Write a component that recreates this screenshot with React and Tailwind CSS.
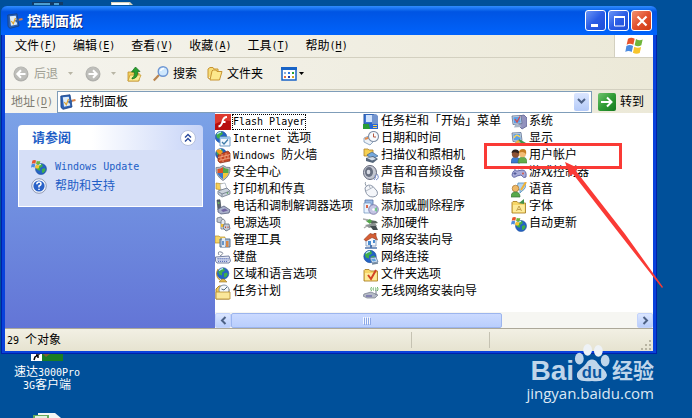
import React from "react";

const Latin = ({ children }) => (
  <span className="font-['DejaVu_Sans_Mono','Liberation_Mono',monospace] text-[10px]">{children}</span>
);

const Icon = ({ size = 16, children }) => (
  <svg width={size} height={size} viewBox="0 0 16 16" className="shrink-0" aria-hidden="true">
    {children}
  </svg>
);

const Globe = ({ x = 8, y = 8, r = 6 }) => (
  <g transform={`translate(${x} ${y}) scale(${r / 6})`}>
    <circle r="6" fill="#2463c4" stroke="#174a99" strokeWidth=".6" />
    <path d="M-5-2Q-3-6 1-5.5L2-3-1-1-1 2-4 1ZM1 0 4-1 5 1 3 4 1 4Z" fill="#3fae49" />
    <path d="M-4-3Q-2-5 0-5" stroke="#bfe6ff" strokeWidth="1.2" fill="none" />
  </g>
);

const FolderShape = () => (
  <>
    <path d="M1 3.5 2 2.5H6L7.5 4H14.5V14H1Z" fill="#f6d667" stroke="#a9822a" strokeWidth=".9" />
    <path d="M2 6H13.7V13.2H2Z" fill="#fdeb9a" />
  </>
);

const WinPetals = () => (
  <>
    <path d="M2 2Q4.500.5 7 2L6 6.500Q3.500 5 1 6.500Z" fill="#e8542c" />
    <path d="M8 2.300Q10.500 4 13 2.700L12 7Q9.500 8.500 7 7Z" fill="#6fb53b" />
    <path d="M.8 7.500Q3.300 6 5.800 7.500L4.800 12Q2.300 10.500 0 12Z" fill="#4b8be0" />
    <path d="M6.700 8Q9.200 9.500 11.800 8.200L10.800 12.700Q8.300 14 5.700 12.500Z" fill="#f7c52d" />
  </>
);

const UpdateGlobe = () => (
  <>
    <Globe x={10} y={10} r={5.5} />
    <g transform="scale(.72)">
      <WinPetals />
    </g>
  </>
);

const ControlPanelShape = () => (
  <>
    <path d="M.8 2 10 .8 12 13 3 15.300 1 13.500Z" fill="#2c62b4" stroke="#173f83" strokeWidth=".8" />
    <path d="M2.800 3.300 8.800 2.700 10.200 11.500 4 12.700Z" fill="#dcecfb" />
    <path d="M4.300 8 6.300 10.800 8.500 5" stroke="#e0a32c" strokeWidth="1.200" fill="none" />
    <path d="M8.500 8.500 12 6.800" stroke="#365f9d" strokeWidth="2.400" />
    <path d="M12 6.800 15.500 6" stroke="#d98045" strokeWidth="2" />
  </>
);

const Monitor = () => (
  <>
    <path d="M1 2 10 1.500 11 9.500 2 10.500Z" fill="#cfd8e6" stroke="#5c7090" strokeWidth=".8" />
    <path d="M2.200 3.200 9 2.700 9.800 8.500 3 9.200Z" fill="#5b9fe8" />
    <path d="M4 11 9 10.500 10.500 13 3 13.500Z" fill="#a9b5c6" />
  </>
);

const icons = {
  flash: (
    <>
      <path d="M0 0H16V16H0Z" fill="#b80f0f" />
      <path d="M0 0H16V7Q8 5 0 10Z" fill="#dd3a30" />
      <path d="M12 3Q8.500 3 7.500 7.500Q6.500 12 3.500 12.500M7 8H10.500" stroke="#fff" strokeWidth="1.900" fill="none" />
    </>
  ),
  internet: (
    <>
      <Globe x={6} y={6} r={5.8} />
      <path d="M5 6H15V15H5Z" fill="#f3f9ff" stroke="#6f9bc4" />
      <path d="M5 6H15V8H5Z" fill="#9cc4e8" />
      <path d="M7 11 9 13 13 8.500" stroke="#3f7ca8" strokeWidth="1.300" fill="none" />
    </>
  ),
  firewall: (
    <>
      <Globe x={6} y={6} r={5.5} />
      <path d="M3 7 13 3 15 5V13L5 15 3 13Z" fill="#c64825" stroke="#84301b" strokeWidth=".7" />
      <path d="M3 9.500 15 6.500M4 12.500 15 10M7 6V9M11 5V8M6 9V12M10 8V11M13 7V10M8 12V14" stroke="#f6b18b" strokeWidth=".8" />
      <path d="M1 3Q4-1 8 4L5 7Z" fill="#f39c20" />
    </>
  ),
  security: (
    <>
      <path d="M8 .5Q11 3 15 2.500Q15.500 11 8 15.500Q.5 11 1 2.500Q5 3 8 .5Z" fill="#b9bec8" stroke="#808996" />
      <path d="M8 2Q5.500 4 2.500 4V8H8Z" fill="#dd5126" />
      <path d="M8 2Q10.500 4 13.500 4V8H8Z" fill="#55a847" />
      <path d="M2.500 8H8V14Q3.500 11.500 2.500 8Z" fill="#3b78cc" />
      <path d="M13.500 8H8V14Q12.500 11.500 13.500 8Z" fill="#f4c737" />
    </>
  ),
  printer: (
    <>
      <path d="M1 1 8 2 7 8 1 7Z" fill="#f5cf58" stroke="#b98a22" strokeWidth=".7" />
      <path d="M5 2 10 1 12 7 6 8Z" fill="#fff" stroke="#9eaab8" strokeWidth=".7" />
      <path d="M3 9 12 6 15 9V12L7 15 3 12Z" fill="#cbd2dc" stroke="#697586" strokeWidth=".8" />
      <path d="M4 10 7 12 14 9.500M7 12V14" stroke="#7c8796" fill="none" />
      <circle cx="12.500" cy="11" r=".8" fill="#49a24b" />
    </>
  ),
  phone: (
    <>
      <path d="M2 1 5 .8 6 10 3 11Z" fill="#59636e" stroke="#313a44" strokeWidth=".6" />
      <path d="M3 10 9 7 15 11 14 14 6 15 3 13Z" fill="#a9b0ca" stroke="#58617e" strokeWidth=".8" />
      <path d="M6 11 10 9.500 13 11.500 8 13Z" fill="#7064a2" />
      <path d="M2.800 4H4.500" stroke="#72c965" strokeWidth="1.500" />
    </>
  ),
  power: (
    <>
      <path d="M2 2 6 1 8 4 6 7 2 6Z" fill="#c3c9d4" stroke="#6c7583" strokeWidth=".8" />
      <path d="M6 5Q8 1 10 5V13H6Z" fill="#e6e8ed" stroke="#68727e" strokeWidth=".8" />
      <path d="M6 8H10V11H6Z" fill="#f1bd33" />
      <path d="M9 8 14 8 15 13 11 15 8 12Z" fill="#c5cbd6" stroke="#5e6b7e" strokeWidth=".8" />
      <path d="M10.500 10.500V12M13 10.500V12" stroke="#c15034" />
    </>
  ),
  admin: (
    <>
      <path d="M0 3H4L5 4H10V10H0Z" fill="#f6d566" stroke="#b68c2a" strokeWidth=".7" />
      <path d="M5 6H15V14H5Z" fill="#a8bdd7" stroke="#567292" />
      <path d="M7 5H10V14H7Z" fill="#dfe9f4" />
      <path d="M11 8H13.500V14H11Z" fill="#d88845" />
      <path d="M8 8V12" stroke="#4078b9" strokeWidth="1.500" />
    </>
  ),
  keyboard: (
    <>
      <path d="M4 5Q2 1 6 2T5 6" stroke="#7b8496" fill="none" />
      <path d="M.5 7 14 6 15.500 11 14 13H2L.5 11Z" fill="#e3e7f3" stroke="#68749a" strokeWidth=".9" />
      <path d="M2.500 8.500H13.500M2.500 10H14M3 11.500H13" stroke="#5d72bb" strokeDasharray="1.200 .8" />
    </>
  ),
  region: (
    <>
      <path d="M3 2Q-.5 9 5 13" stroke="#d1a43b" strokeWidth="1.200" fill="none" />
      <Globe x={8} y={6.5} r={5.8} />
      <path d="M7 12H9L12 15H4Z" fill="#e1b94c" stroke="#947125" strokeWidth=".6" />
    </>
  ),
  tasks: (
    <>
      <path d="M1 5 4 2H8L14 5V15H1Z" fill="#f2ca53" stroke="#9f7726" strokeWidth=".9" />
      <circle cx="9" cy="6" r="5" fill="#f4f8fc" stroke="#788ba3" strokeWidth=".9" />
      <path d="M9 6 12 3M9 6 6.500 5" stroke="#52697d" />
      <path d="M1 8H15V15H1Z" fill="#fae79a" stroke="#b28b2e" strokeWidth=".8" />
    </>
  ),
  taskbar: (
    <>
      <path d="M1 0H11V10H1Z" fill="#3c76d8" stroke="#285498" />
      <path d="M3 1H9V8H3Z" fill="#cfe2fc" />
      <path d="M9 1 13 0 15 2V10H9Z" fill="#7395cf" />
      <path d="M0 10H15V15H0Z" fill="#2765d8" />
      <path d="M0 10H6L7 15H0Z" fill="#299d35" />
      <path d="M10 11.500H14M10 13.500H14" stroke="#f5d25c" />
    </>
  ),
  date: (
    <>
      <path d="M1 7 8 4 14 7 7 14 1 11Z" fill="#edf2f8" stroke="#7994b5" strokeWidth=".8" />
      <path d="M2 8 9 5.500" stroke="#e38a4b" strokeWidth="2" />
      <circle cx="10.500" cy="5.500" r="5" fill="#f7fafe" stroke="#8190a6" strokeWidth="1.100" />
      <path d="M10.500 2.500V6H13" stroke="#b55a41" fill="none" />
    </>
  ),
  scanner: (
    <>
      <path d="M1 1H5L6 2H10V8H1Z" fill="#f6d052" stroke="#ae8129" strokeWidth=".8" />
      <path d="M4 7 9 4 15 8 9 11Z" fill="#75a8de" stroke="#42658d" strokeWidth=".7" />
      <path d="M3 10 10 8 15 11 10 15 3 13Z" fill="#56677c" />
      <path d="M4 10 10 9 13 11 9 12.500Z" fill="#d3dde9" />
    </>
  ),
  sound: (
    <>
      <ellipse cx="7" cy="7.500" rx="6.500" ry="7" fill="#c4c7d2" stroke="#62677a" />
      <ellipse cx="6" cy="7" rx="4" ry="5" fill="#686f80" />
      <ellipse cx="5.500" cy="7" rx="1.800" ry="2.300" fill="#d9dce5" />
      <path d="M12 10Q14 12 11 15M14 9Q17 13 13 15" stroke="#7588c7" fill="none" />
    </>
  ),
  mouse: (
    <>
      <path d="M4 5Q1 1 3 0" stroke="#8d98a6" fill="none" />
      <path d="M2 6Q5 1 10 4.500L14 9Q16 14 10 15Q4 15 2.500 9Z" fill="#f4f6fa" stroke="#8c96a8" />
      <path d="M3 9 10.500 5M6 3.500 7.500 6.800" stroke="#a0a8b5" strokeWidth=".8" />
    </>
  ),
  programs: (
    <>
      <path d="M2 1H10V11H2Z" fill="#99b9e6" stroke="#546fa1" strokeWidth=".8" />
      <path d="M1 4H8V14H1Z" fill="#e8f2ff" stroke="#698cb7" strokeWidth=".7" />
      <path d="M3 6H5V9H3Z" fill="#d9664a" />
      <circle cx="10.500" cy="10.500" r="4.800" fill="#c4c5e4" stroke="#73709f" strokeWidth=".8" />
      <path d="M10.500 10.500 14 8V13Z" fill="#72c68d" />
      <circle cx="10.500" cy="10.500" r="1.300" fill="#fff" />
    </>
  ),
  hardware: (
    <>
      <path d="M1 3 13 5 15 7 9 8Z" fill="#59645e" />
      <path d="M3 5 7 3 9 5 7 8Z" fill="#53a64a" />
      <path d="M2 9 12 7 14 10 6 12Z" fill="#8c9292" />
      <path d="M7 10 13 10 15 14 10 14Z" fill="#444d51" />
      <path d="M0 3 5 4M4 10 1 12" stroke="#aaa" strokeWidth="1.500" />
    </>
  ),
  home: (
    <>
      <path d="M3 7 8 2 13 7V13H3Z" fill="#f5f7fc" stroke="#7992b5" strokeWidth=".8" />
      <path d="M1 6.500 7 .5 11 1.500V0H13V3L14.500 7 9 4.500 3 8Z" fill="#d55e34" stroke="#913920" strokeWidth=".6" />
      <path d="M5 8H8V12H5ZM10 7H12V10H10Z" fill="#4a8cd0" />
      <path d="M2 15H14" stroke="#5075ad" strokeWidth="1.500" />
      <path d="M8 12V15" stroke="#5075ad" strokeWidth="2" />
    </>
  ),
  network: (
    <>
      <Globe x={7} y={6.5} r={6.2} />
      <path d="M7 8 13 7 15 12 9 13Z" fill="#d5e3f3" stroke="#5c7a9e" strokeWidth=".8" />
      <path d="M8 9 12 8.500 13 11 10 11.500Z" fill="#61a2df" />
      <path d="M9 14 15 13" stroke="#72879c" strokeWidth="1.500" />
    </>
  ),
  folderOptions: (
    <>
      <FolderShape />
      <path d="M5 8 8 12 13 3" stroke="#d24425" strokeWidth="2" fill="none" />
    </>
  ),
  wireless: (
    <>
      <path d="M1 10 8 8 15 11 12 14 4 14 0 12Z" fill="#b5bac6" stroke="#727a8a" strokeWidth=".7" />
      <path d="M3 12H9" stroke="#6a63a8" strokeWidth="1.300" />
      <path d="M13 11V6" stroke="#727a8a" />
      <path d="M8.500 3Q7 5 8.500 7M10.500 3.500Q9.500 5 10.500 6.500M12.500 3.500Q13.500 5 12.500 6.500M14.300 3Q15.800 5 14.300 7" stroke="#5aad57" strokeWidth=".9" fill="none" />
    </>
  ),
  system: (
    <>
      <path d="M8 2 13 1 16 4V12L11 15 8 12Z" fill="#9292bd" stroke="#5c5e8f" strokeWidth=".8" />
      <Monitor />
      <path d="M4 5 6 8 9 2.500" stroke="#d24b4b" strokeWidth="1.300" fill="none" />
    </>
  ),
  display: (
    <>
      <Monitor />
      <path d="M3 7Q5 2 9 6" stroke="#f2d15a" strokeWidth="1.500" fill="none" />
      <path d="M8 8 15 12 13 14 7 10Z" fill="#43964a" />
      <path d="M4 12 7 9 9 10.500 5 14Z" fill="#f1b443" />
    </>
  ),
  users: (
    <>
      <path d="M0 15Q0 9 4.500 9T9 15Z" fill="#3b7bd0" stroke="#274f8e" strokeWidth=".6" />
      <circle cx="4.500" cy="6" r="3.700" fill="#8d5134" />
      <path d="M.5 5Q1 1 5 1.500T8 6Q5 3 .5 5Z" fill="#2e211e" />
      <path d="M7 15Q7 9 11.500 9T16 15Z" fill="#64ad4a" stroke="#407d31" strokeWidth=".6" />
      <circle cx="11.500" cy="5.500" r="3.700" fill="#f3bd76" />
      <path d="M8 5Q8 1 12 1T15 6Q12 2.500 8 5Z" fill="#c87f25" />
    </>
  ),
  game: (
    <>
      <path d="M4 5Q3 1 8 4" stroke="#6972a0" fill="none" />
      <path d="M1 10Q2 4 6 6L11 5Q16 5 15 12Q13 14 10 10L6 11Q2 14 1 10Z" fill="#a9acd8" stroke="#5961a1" strokeWidth=".9" />
      <path d="M4 7V10M2.500 8.500H5.500" stroke="#525b99" />
      <circle cx="12" cy="8.500" r="1" fill="#da5a45" />
    </>
  ),
  speech: (
    <>
      <path d="M7 1H14Q16 6 11 9L9 11V8L6 7Z" fill="#b1d3f0" stroke="#5790bb" strokeWidth=".8" />
      <path d="M10 8 15 0" stroke="#f0b135" strokeWidth="2" />
      <circle cx="4.500" cy="6.500" r="3.300" fill="#efb967" stroke="#a67431" strokeWidth=".7" />
      <path d="M0 15Q0 10 4.500 10T9 15Z" fill="#58a94a" stroke="#377439" strokeWidth=".7" />
    </>
  ),
  fonts: (
    <>
      <FolderShape />
      <path d="M8 4 13 0V5Z" fill="#439249" />
      <path d="M5.500 12 8 7 10.500 12M6.500 10.500H9.500" stroke="#c3a04c" fill="none" />
    </>
  ),
  update: <UpdateGlobe />,
};

const columns = [
  [
    ["flash", <Latin>Flash Player</Latin>],
    ["internet", <><Latin>Internet </Latin>选项</>],
    ["firewall", <><Latin>Windows </Latin>防火墙</>],
    ["security", "安全中心"],
    ["printer", "打印机和传真"],
    ["phone", "电话和调制解调器选项"],
    ["power", "电源选项"],
    ["admin", "管理工具"],
    ["keyboard", "键盘"],
    ["region", "区域和语言选项"],
    ["tasks", "任务计划"],
  ],
  [
    ["taskbar", "任务栏和「开始」菜单"],
    ["date", "日期和时间"],
    ["scanner", "扫描仪和照相机"],
    ["sound", "声音和音频设备"],
    ["mouse", "鼠标"],
    ["programs", "添加或删除程序"],
    ["hardware", "添加硬件"],
    ["home", "网络安装向导"],
    ["network", "网络连接"],
    ["folderOptions", "文件夹选项"],
    ["wireless", "无线网络安装向导"],
  ],
  [
    ["system", "系统"],
    ["display", "显示"],
    ["users", "用户帐户"],
    ["game", "游戏控制器"],
    ["speech", "语音"],
    ["fonts", "字体"],
    ["update", "自动更新"],
  ],
];

const menus = [
  ["文件", "F"],
  ["编辑", "E"],
  ["查看", "V"],
  ["收藏", "A"],
  ["工具", "T"],
  ["帮助", "H"],
];

const NavCircle = ({ back }) => (
  <Icon>
    <circle cx="8" cy="8" r="7.500" fill="#b0b0ac" />
    <circle cx="8" cy="7.500" r="6.500" fill="#bebeba" />
    <path d={back ? "M12.500 8H4.500M8 4.300 4.300 8 8 11.700" : "M3.500 8H11.500M8 4.300 11.700 8 8 11.700"} stroke="#fff" strokeWidth="2" fill="none" />
  </Icon>
);

const Caret = ({ color }) => (
  <svg width="5" height="3" viewBox="0 0 5 3" className="shrink-0" aria-hidden="true">
    <path d="M0 0H5L2.500 3Z" fill={color} />
  </svg>
);

const Separator = () => <span className="h-7 w-px shrink-0 bg-[#c9c6b5]" />;

const captionButton =
  "flex size-[21px] items-center justify-center rounded-[3px] border border-white bg-linear-to-br from-[#6c94f5] via-[#2a5ce5] to-[#1f4fd8]";

function TitleBar() {
  return (
    <header className="flex h-[29px] items-center rounded-t-[6px] bg-linear-to-b from-[#2f8cff] via-[#0054e3] via-20% to-[#0063fc] pr-[5px] pl-[6px] text-white">
      <Icon><ControlPanelShape /></Icon>
      <h1 className="ml-1 flex-1 text-[14px] leading-5 font-bold [text-shadow:1px_1px_#0a2a80]">控制面板</h1>
      <div className="flex gap-[2px]">
        <button aria-label="最小化" className={captionButton}>
          <Icon><path d="M3 11H10V14H3Z" fill="#fff" /></Icon>
        </button>
        <button aria-label="最大化" className={captionButton}>
          <Icon><path d="M3.500 3.500H13.500V13H3.500Z" stroke="#fff" fill="none" /><path d="M3 3H14V5H3Z" fill="#fff" /></Icon>
        </button>
        <button aria-label="关闭" className="flex size-[21px] items-center justify-center rounded-[3px] border border-white bg-linear-to-br from-[#f09070] via-[#e2512d] to-[#cf3a12]">
          <Icon><path d="M3.500 3.500 12.500 12.500M12.500 3.500 3.500 12.500" stroke="#fff" strokeWidth="2.200" /></Icon>
        </button>
      </div>
    </header>
  );
}

function MenuBar() {
  return (
    <nav className="flex h-[23px] items-stretch border-b border-[#d3d0c0]">
      <div className="flex flex-1 items-center gap-4 border-r border-[#d3d0c0] pl-[10px]">
        {menus.map(([name, key]) => (
          <button key={key} className="flex items-center whitespace-nowrap">
            {name}<Latin>(<u className="underline-offset-2">{key}</u>)</Latin>
          </button>
        ))}
      </div>
      <div className="flex w-[38px] items-center justify-center bg-white">
        <svg width="20" height="20" viewBox="-1 0 15 15" aria-hidden="true"><WinPetals /></svg>
      </div>
    </nav>
  );
}

function Toolbar() {
  return (
    <div className="flex h-8 items-center border-b border-[#d3d0c0] pl-2">
      <button disabled className="flex items-center gap-[5px] text-[#a09f94]">
        <NavCircle back />
        后退
      </button>
      <span className="ml-[10px]"><Caret color="#b8b5a5" /></span>
      <button disabled aria-label="前进" className="ml-3 flex"><NavCircle /></button>
      <span className="ml-[10px]"><Caret color="#b8b5a5" /></span>
      <button aria-label="向上" className="ml-[10px] flex">
        <Icon>
          <path d="M2 6H7L8 7H13V15H2Z" fill="#f2d05d" stroke="#c0902c" strokeWidth=".8" />
          <path d="M4 9H15L12.500 15H2Z" fill="#fcec93" stroke="#c89b34" strokeWidth=".8" />
          <path d="M6 12Q9 11 8.500 6H5.500L9.500 1 14 5.500H11.500Q12.500 12 6 13Z" fill="#2aa02d" stroke="#176d1d" strokeWidth=".7" />
        </Icon>
      </button>
      <span className="ml-[5px]"><Separator /></span>
      <button className="ml-[6px] flex items-center gap-1">
        <Icon>
          <path d="M.8 14.500 6 9" stroke="#b9854f" strokeWidth="2.200" />
          <circle cx="10" cy="5.500" r="4.800" fill="#cfe8fd" stroke="#6e96d2" strokeWidth="1.400" />
          <path d="M7.500 5Q8.500 2.500 11 2.500" stroke="#fff" strokeWidth="1.500" fill="none" />
        </Icon>
        搜索
      </button>
      <button className="ml-[10px] flex items-center gap-1">
        <Icon>
          <path d="M1 12V3L3 1.500H6L7 3H11V5M1 12 3 13" fill="#f7dc77" stroke="#c89431" />
          <path d="M3 14 5 5 6 4H9L10 5.500H15L12.500 14Z" fill="#fde88c" stroke="#c89431" />
        </Icon>
        文件夹
      </button>
      <span className="ml-[10px]"><Separator /></span>
      <button aria-label="查看方式" className="ml-2 flex items-center gap-[2px]">
        <Icon>
          <path d="M1 2H15V14H1Z" fill="#fff" stroke="#1863c6" strokeWidth="1.500" />
          <path d="M0 1H16V4H0Z" fill="#1863c6" />
          <path d="M3 6H5V8H3Z" fill="#8cacd9" /><path d="M7 6H9V8H7Z" fill="#2d78df" /><path d="M11 6H13V8H11Z" fill="#249c31" />
          <path d="M3 10H5V12H3Z" fill="#e5713e" /><path d="M7 10H9V12H7Z" fill="#263ca5" /><path d="M11 10H13V12H11Z" fill="#dba321" />
        </Icon>
        <Caret color="#000" />
      </button>
    </div>
  );
}

function AddressBar() {
  return (
    <div className="flex h-[23px] items-center">
      <label htmlFor="address" className="flex w-[52px] items-center pl-[6px] whitespace-nowrap text-[#7f7d72]">
        地址<Latin>(<u className="underline-offset-2">D</u>)</Latin>
      </label>
      <div className="flex h-[22px] min-w-0 flex-1 items-center border border-[#7f9db9] bg-white px-[2px]">
        <Icon><ControlPanelShape /></Icon>
        <input id="address" defaultValue="控制面板" className="ml-1 min-w-0 flex-1 bg-transparent leading-4 outline-none" />
        <button aria-label="展开地址列表" className="flex h-[18px] w-[15px] items-center justify-center rounded-[2px] bg-linear-to-b from-[#dbe6ff] to-[#b4caf8]">
          <svg width="9" height="7" viewBox="0 0 9 7" aria-hidden="true"><path d="M1 1 4.500 4.500 8 1" stroke="#4d6185" strokeWidth="2" fill="none" /></svg>
        </button>
      </div>
      <button className="mr-[9px] ml-[6px] flex items-center gap-1 whitespace-nowrap">
        <span className="flex size-[18px] items-center justify-center rounded-[2px] bg-linear-to-br from-[#6fc36d] via-[#2f9c35] to-[#147a20]">
          <Icon><path d="M2 8H12M8 3.500 12.500 8 8 12.500" stroke="#fff" strokeWidth="2" fill="none" /></Icon>
        </span>
        转到
      </button>
    </div>
  );
}

function SidePane() {
  return (
    <aside className="w-[210px] shrink-0 bg-linear-to-b from-[#7ba2e7] to-[#6375d6] pt-3 pr-3 pl-[13px]">
      <section className="text-[#215dc6]">
        <div className="flex h-[25px] items-center rounded-t-[4px] bg-linear-to-r from-white from-40% to-[#c6d3f7] pr-[7px] pl-[14px]">
          <h2 className="flex-1 text-[13px] leading-5 font-bold">请参阅</h2>
          <button aria-label="收起" className="flex">
            <Icon>
              <circle cx="8" cy="8" r="7.500" fill="#fff" stroke="#b6c1dd" />
              <path d="M5 7.500 8 4.500 11 7.500M5 11.500 8 8.500 11 11.500" stroke="#28489b" strokeWidth="1.400" fill="none" />
            </Icon>
          </button>
        </div>
        <div className="flex flex-col gap-[3px] border border-t-0 border-white bg-[#d6dff7] pt-2 pb-3 pl-3">
          <a href="#update" className="flex h-[17px] items-center gap-2"><Icon><UpdateGlobe /></Icon><Latin>Windows Update</Latin></a>
          <a href="#help" className="flex h-4 items-center gap-2">
            <Icon>
              <circle cx="8" cy="8" r="7.300" fill="#f5f8fd" stroke="#9099b5" />
              <circle cx="8" cy="8" r="5.600" fill="#2a62c8" />
              <path d="M5.800 6.200Q6 4 8 4T10 6Q10 7 8 8V9.500M8 10.700V12" stroke="#fff" strokeWidth="1.500" fill="none" />
            </Icon>
            帮助和支持
          </a>
        </div>
      </section>
    </aside>
  );
}

function HorizontalScroll() {
  const arrow = "flex h-[15px] w-4 shrink-0 items-center justify-center rounded-[2px] border border-[#c3d3fb] bg-linear-to-b from-[#dbe6ff] to-[#b9cdfa]";
  return (
    <div className="flex h-4 items-center bg-[#f6f6f2]">
      <button aria-label="向左滚动" className={arrow}>
        <svg width="7" height="9" viewBox="0 0 7 9" className="shrink-0" aria-hidden="true"><path d="M5.500 1 2 4.500 5.500 8" stroke="#4d6185" strokeWidth="2" fill="none" /></svg>
      </button>
      <div className="flex flex-1">
        <div className="flex h-[15px] w-2/3 items-center justify-center gap-px rounded-[2px] border border-[#9cb5ee] bg-linear-to-b from-[#cbdaff] to-[#b9cefc]">
          {[0, 1, 2, 3].map((n) => <span key={n} className="h-[7px] w-px bg-[#f4f8ff] shadow-[1px_1px_#8ca8e6]" />)}
        </div>
      </div>
      <button aria-label="向右滚动" className={arrow}>
        <svg width="7" height="9" viewBox="0 0 7 9" className="shrink-0" aria-hidden="true"><path d="M1.500 1 5 4.500 1.500 8" stroke="#4d6185" strokeWidth="2" fill="none" /></svg>
      </button>
    </div>
  );
}

function FileList() {
  return (
    <main className="flex min-w-0 flex-1 flex-col bg-white">
      <div className="flex flex-1 pb-3">
        {columns.map((items, c) => (
          <ul key={c} className="w-[148px] shrink-0">
            {items.map(([icon, label]) => (
              <li key={icon}>
                <button className="flex h-[17px] items-center gap-px whitespace-nowrap">
                  <Icon>{icons[icon]}</Icon>
                  <span className={icon === "flash" ? "flex h-4 items-center border border-dotted border-black" : "border border-transparent leading-[15px]"}>{label}</span>
                </button>
              </li>
            ))}
          </ul>
        ))}
      </div>
      <HorizontalScroll />
    </main>
  );
}

function StatusBar() {
  return (
    <footer className="flex h-[22px] items-center bg-linear-to-b from-[#f2f0e4] to-[#e6e3d0]">
      <p className="flex-1 pl-[2px]"><Latin>29 </Latin>个对象</p>
      <div className="flex h-full w-[242px] items-center">
        <span className="h-4 w-[78px] border-l border-[#c5c2b2]" />
        <span className="h-4 flex-1 border-l border-[#c5c2b2]" />
        <svg width="12" height="12" viewBox="0 0 12 12" className="mr-px self-end" aria-hidden="true">
          <path d="M9 1H11V3H9ZM5 5H7V7H5ZM9 5H11V7H9ZM1 9H3V11H1ZM5 9H7V11H5ZM9 9H11V11H9Z" fill="#b8b4a2" />
        </svg>
      </div>
    </footer>
  );
}

function Watermark() {
  return (
    <div className="absolute right-[38px] bottom-[15px] text-[#bfd5ea]">
      <div className="flex items-end justify-end">
        <span className="font-['Liberation_Sans',Arial,sans-serif] text-[28px] leading-6 font-bold">Bai</span>
        <svg width="36" height="39" viewBox="0 0 36 40" className="shrink-0" aria-hidden="true">
          <ellipse cx="5" cy="15" rx="4.500" ry="6" fill="#bfd5ea" />
          <ellipse cx="13.500" cy="6" rx="4.500" ry="6" fill="#eef2f6" />
          <ellipse cx="24.500" cy="7" rx="4.500" ry="6" fill="#eef2f6" />
          <ellipse cx="31.500" cy="17" rx="4.500" ry="6" fill="#bfd5ea" />
          <path d="M18 16Q22 16 24 20Q26 23 30 26Q36 32 31 36Q28 39 18 38Q7 39 4 36Q0 31 6 26Q10 23 12 20Q14 16 18 16Z" fill="#bfd5ea" />
          <text x="18" y="35" textAnchor="middle" fontSize="17" fontWeight="bold" fontFamily="Liberation Sans, Arial, sans-serif" fill="#0b55a0">du</text>
        </svg>
        <span className="ml-[2px] text-[21px] leading-6 font-bold">经验</span>
      </div>
      <p className="font-['Open_Sans','Noto_Sans',sans-serif] text-[15px] leading-5 text-[#dce8f4]">jingyan.baidu.com</p>
    </div>
  );
}

export default function App() {
  return (
    <div className="relative flex min-h-screen flex-col overflow-hidden bg-[#00509a] font-['Liberation_Sans','Noto_Sans_CJK_SC',sans-serif] text-[12px] leading-4 text-black">
      <div className="flex h-[6px] items-start gap-12 pl-8">
        <svg width="31" height="5" viewBox="0 0 31 5" aria-hidden="true"><path d="M0 2H31V5H0Z" fill="#123b67" /><path d="M2 3H18V5H2ZM22 3H27V5H22Z" fill="#4d9ed0" /></svg>
        <svg width="22" height="5" viewBox="0 0 22 5" aria-hidden="true"><path d="M0 2H19L22 5H0Z" fill="#d8d3bd" /><path d="M1 3H18V5H1Z" fill="#fff" /></svg>
      </div>

      <div className="mr-[35px] ml-px flex flex-col rounded-t-[7px] bg-[#0842dc] shadow-[inset_0_0_0_1px_#0022a8]">
        <TitleBar />
        <div className="mr-1 mb-[3px] ml-1 flex flex-col bg-linear-to-r from-[#f5f4ee] to-[#ece9d8]">
          <MenuBar />
          <Toolbar />
          <AddressBar />
          <div className="flex border-b border-[#aca899]">
            <SidePane />
            <FileList />
          </div>
          <StatusBar />
        </div>
      </div>

      <div className="flex w-[94px] flex-1 flex-col items-center text-white">
        <svg width="32" height="7" viewBox="0 0 32 7" aria-hidden="true">
          <path d="M11 0H32V7H11Z" fill="#197d24" /><path d="M12 0H19L15 3Z" fill="#7d6230" /><path d="M0 0H11V7H0Z" fill="#fff" />
          <path d="M3 6 4 3 7 1H5M7 1V4" stroke="#000" strokeWidth="1.500" fill="none" />
        </svg>
        <p className="mt-[5px] text-center leading-3 whitespace-nowrap">
          速达<Latin>3000Pro</Latin><br /><Latin>3G</Latin>客户端
        </p>
        <svg width="28" height="5" viewBox="0 0 28 5" className="mt-auto" aria-hidden="true">
          <path d="M5 0H22L28 5H5Z" fill="#f4f6f4" /><path d="M0 2H16V5H0Z" fill="#67a95b" /><path d="M2 3H14V5H2Z" fill="#e4f1df" />
        </svg>
      </div>

      <div className="pointer-events-none absolute top-[143px] left-[484px] h-[26px] w-[138px] border-3 border-[#fa3a35]" />
      <svg width="100" height="128" viewBox="0 0 100 128" className="pointer-events-none absolute top-[161px] left-[564px]" aria-hidden="true">
        <path d="M1 1 14 7 12 10 61 73 99 126 98 127 58 76 9 13 6 15Z" fill="#fa3a35" />
      </svg>
      <Watermark />
    </div>
  );
}
